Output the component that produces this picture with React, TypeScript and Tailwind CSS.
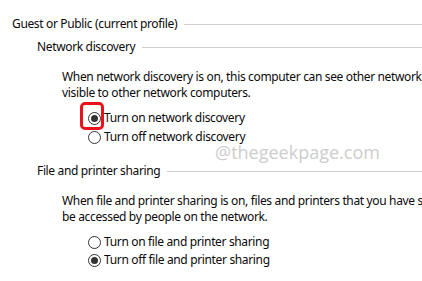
import React from "react";

function Radio({ checked, label }: { checked?: boolean; label: string }) {
  return (
    <div className="flex items-center h-[18px] pl-[88px]">
      <span className="w-[13px] h-[13px] rounded-full border border-[#333] flex items-center justify-center bg-white shrink-0">
        {checked && <span className="w-[7px] h-[7px] rounded-full bg-[#333]" />}
      </span>
      <span className="ml-[3px] whitespace-nowrap">{label}</span>
    </div>
  );
}

function Header({ label, pl }: { label: string; pl: string }) {
  return (
    <div className={`flex items-center h-[16px] ${pl}`}>
      <span className="whitespace-nowrap">{label}</span>
      <span className="flex-1 h-px bg-[#cfcfcf] ml-[7px]" />
    </div>
  );
}

export default function App() {
  return (
    <div
      className="relative w-[422px] h-[281px] bg-white overflow-hidden text-[12px] leading-[16px] tracking-[-0.35px] text-[#0a0a0a]"
      style={{ fontFamily: '"Noto Sans", "Open Sans", sans-serif' }}
    >
      <div className="pt-[16px]">
        <Header label="Guest or Public (current profile)" pl="pl-[12px]" />
        <div className="mt-[7px]">
          <Header label="Network discovery" pl="pl-[37px]" />
        </div>
        <div className="mt-[14px] pl-[62px] whitespace-nowrap">
          <div>When network discovery is on, this computer can see other network</div>
          <div>visible to other network computers.</div>
        </div>
        <div className="mt-[8px]">
          <Radio checked label="Turn on network discovery" />
          <div className="mt-[1px]">
            <Radio label="Turn off network discovery" />
          </div>
        </div>
        <div className="mt-[17px]">
          <Header label="File and printer sharing" pl="pl-[37px]" />
        </div>
        <div className="mt-[14px] pl-[62px] whitespace-nowrap">
          <div>When file and printer sharing is on, files and printers that you have shared can</div>
          <div>be accessed by people on the network.</div>
        </div>
        <div className="mt-[8px]">
          <Radio label="Turn on file and printer sharing" />
          <Radio checked label="Turn off file and printer sharing" />
        </div>
      </div>
      <div className="absolute left-[80px] top-[102px] w-[24px] h-[28px] border-[3px] border-[#e8131b] rounded-[5px]" />
      <div
        className="absolute left-[215px] top-[140px] text-[18px] leading-[24px] text-[#cdcdcd] whitespace-nowrap tracking-normal"
        style={{ fontFamily: '"Open Sans", sans-serif' }}
      >
        @thegeekpage.com
      </div>
    </div>
  );
}
